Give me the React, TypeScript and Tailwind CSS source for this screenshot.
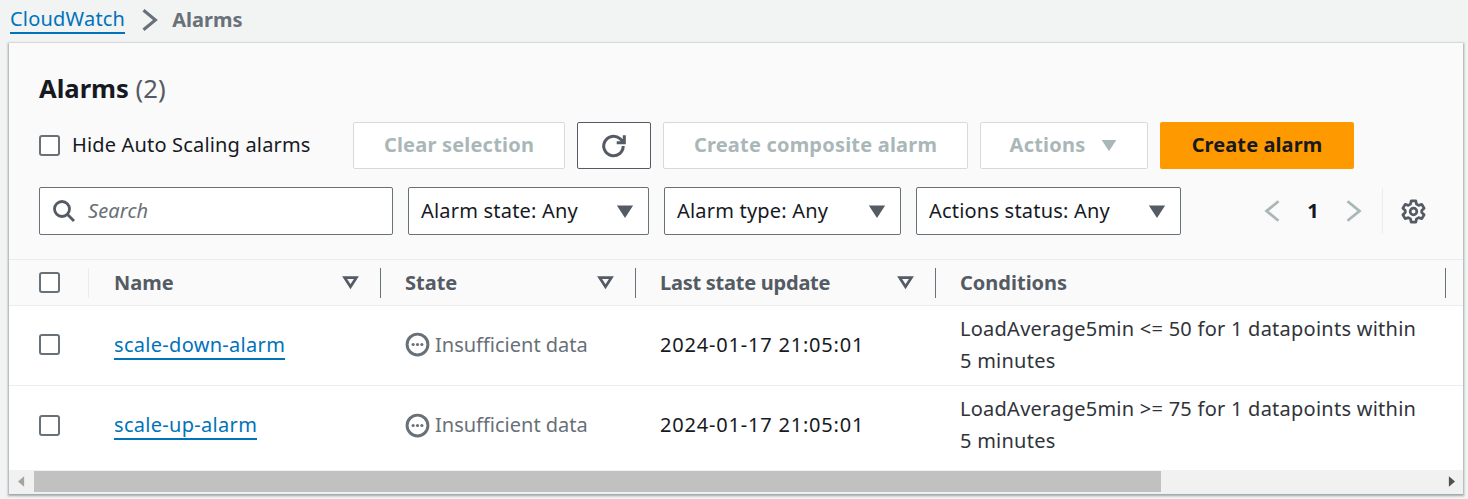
import React from 'react';

function Caret({ className }: { className: string }) {
  return (
    <svg viewBox="0 0 16 16" className={className} fill="currentColor">
      <path d="M1.5 3.5h13L8 13.5z" />
    </svg>
  );
}

function SortCaret() {
  return (
    <svg viewBox="0 0 16 16" className="w-[17px] h-[17px] text-[#545b64]" fill="none" stroke="currentColor" strokeWidth="2.6">
      <path d="M2.5 3.5h11L8 12z" strokeLinejoin="miter" />
    </svg>
  );
}

function Checkbox() {
  return <div className="w-[21px] h-[21px] shrink-0 rounded-[3px] border-2 border-[#687078] bg-white"></div>;
}

function DisabledButton({ label, width }: { label: string; width: string }) {
  return (
    <div className={`${width} h-[47px] pb-[2px] flex items-center justify-center bg-white border border-[#d5dbdb] rounded-[2px] text-[20px] font-bold tracking-[0.2px] text-[#aab7b8]`}>
      {label}
    </div>
  );
}

function FilterSelect({ label, width }: { label: string; width: string }) {
  return (
    <div className={`${width} h-[48px] flex items-center justify-between pl-[12px] pr-[13px] bg-white border border-[#687078] rounded-[2px] text-[20px] tracking-[0.2px] text-[#16191f]`}>
      <span>{label}</span>
      <Caret className="w-[20px] h-[20px] text-[#545b64]" />
    </div>
  );
}

function HeaderCell({ label, width, pad, sortable }: { label: string; width: string; pad: string; sortable?: boolean }) {
  return (
    <div className={`${width} ${pad} h-[30px] flex items-center justify-between pr-[21px] border-r border-[#687078] text-[20px] font-bold text-[#545b64]`}>
      <span>{label}</span>
      {sortable && <SortCaret />}
    </div>
  );
}

function StatusIcon() {
  return (
    <svg viewBox="0 0 24 24" className="w-[25px] h-[25px] text-[#687078]" fill="none" stroke="currentColor" strokeWidth="2.8">
      <circle cx="12" cy="12" r="10" />
      <circle cx="7.8" cy="12" r="1.5" fill="currentColor" stroke="none" />
      <circle cx="12" cy="12" r="1.5" fill="currentColor" stroke="none" />
      <circle cx="16.2" cy="12" r="1.5" fill="currentColor" stroke="none" />
    </svg>
  );
}

function AlarmRow({ name, condition, height }: { name: string; condition: string; height: string }) {
  return (
    <div className={`${height} flex items-center bg-white text-[20px] text-[#16191f]`}>
      <div className="w-[80px] pl-[30px]">
        <Checkbox />
      </div>
      <div className="w-[292px] pl-[25px]">
        <a className="text-[#0073bb] border-b-2 border-[#0073bb] tracking-[0.3px] leading-[26px] inline-block">{name}</a>
      </div>
      <div className="w-[254px] pl-[24px] flex items-center gap-[5px] text-[#687078]">
        <StatusIcon />
        <span>Insufficient data</span>
      </div>
      <div className="w-[300px] pl-[25px] tracking-[0.8px]">2024-01-17 21:05:01</div>
      <div className="flex-1 pl-[25px] pr-[40px] leading-[32px] tracking-[0.25px] text-[#30343a]">{condition}</div>
    </div>
  );
}

export default function App() {
  return (
    <div className="w-[1468px] h-[499px] overflow-hidden bg-[#f2f3f3] font-['Noto_Sans','Open_Sans',sans-serif]">
      {/* Breadcrumb */}
      <div className="h-[43px] flex items-center pl-[10px] pb-[3px] text-[20px]">
        <a className="text-[#0073bb] border-b-2 border-[#0073bb] tracking-[0.2px] leading-[26px]">CloudWatch</a>
        <svg viewBox="0 0 16 24" className="w-[18px] h-[26px] ml-[16px] mr-[13px] text-[#687078]" fill="none" stroke="currentColor" strokeWidth="2.8">
          <path d="M2 3l11 9-11 9" />
        </svg>
        <span className="font-bold text-[#687078]">Alarms</span>
      </div>

      {/* Card */}
      <div className="ml-[9px] w-[1454px] h-[451px] bg-white shadow-[0_1px_2px_1px_rgba(0,28,36,0.35)] flex flex-col">
        <div className="bg-[#fafafa]">
          <div className="h-[217px] pl-[30px] pr-[37px] pt-[27px] border-b border-[#eaeded]">
            <h1 className="text-[25.6px] leading-[37px] font-bold text-[#16191f]">
              Alarms <span className="font-normal text-[#545b64]">(2)</span>
            </h1>
            <div className="mt-[15px] flex items-center">
              <Checkbox />
              <span className="ml-[12px] w-[281px] pb-[2px] text-[20px] tracking-[0.17px] text-[#16191f]">Hide Auto Scaling alarms</span>
              <div className="flex gap-[12px]">
                <DisabledButton label="Clear selection" width="w-[212px]" />
                <div className="w-[74px] h-[47px] flex items-center justify-center bg-white border border-[#545b64] rounded-[2px]">
                  <svg viewBox="0 0 24 24" className="w-[26px] h-[26px] text-[#545b64]" fill="none" stroke="currentColor" strokeWidth="2.8">
                    <path d="M20.5 12a9 9 0 1 1-3-6.7L21 8.500" />
                    <path d="M21.500 2v7h-7" />
                  </svg>
                </div>
                <DisabledButton label="Create composite alarm" width="w-[305px]" />
                <div className="w-[168px] h-[47px] pb-[2px] flex items-center justify-center gap-[15px] bg-white border border-[#d5dbdb] rounded-[2px] text-[20px] font-bold tracking-[0.2px] text-[#aab7b8]">
                  <span>Actions</span>
                  <Caret className="w-[18px] h-[18px] text-[#aab7b8]" />
                </div>
                <div className="w-[194px] h-[47px] pb-[2px] flex items-center justify-center bg-[#ff9900] rounded-[2px] text-[20px] font-bold tracking-[0.1px] text-[#16191f]">
                  Create alarm
                </div>
              </div>
            </div>
            <div className="mt-[18px] flex items-center">
              <div className="w-[354px] h-[48px] flex items-center gap-[12px] pl-[12px] bg-white border border-[#687078] rounded-[2px]">
                <svg viewBox="0 0 24 24" className="w-[24px] h-[24px] text-[#545b64]" fill="none" stroke="currentColor" strokeWidth="2.8">
                  <circle cx="10" cy="10" r="7.5" />
                  <path d="M15.5 15.5L22 22" />
                </svg>
                <span className="text-[20px] italic tracking-[0.1px] text-[#687078]">Search</span>
              </div>
              <div className="ml-[15px] flex gap-[15px]">
                <FilterSelect label="Alarm state: Any" width="w-[241px]" />
                <FilterSelect label="Alarm type: Any" width="w-[237px]" />
                <FilterSelect label="Actions status: Any" width="w-[265px]" />
              </div>
              <div className="ml-auto flex items-center">
                <svg viewBox="0 0 16 24" className="w-[18px] h-[26px] text-[#aab7b8]" fill="none" stroke="currentColor" strokeWidth="2.6">
                  <path d="M14 3L3 12l11 9" />
                </svg>
                <span className="w-[64px] text-center text-[20px] font-bold text-[#16191f]">1</span>
                <svg viewBox="0 0 16 24" className="w-[18px] h-[26px] text-[#aab7b8]" fill="none" stroke="currentColor" strokeWidth="2.6">
                  <path d="M2 3l11 9-11 9" />
                </svg>
                <div className="ml-[19px] h-[46px] border-l border-[#eaeded] pl-[18px] flex items-center">
                  <svg viewBox="0 0 24 24" className="w-[25px] h-[25px] text-[#545b64]" fill="none" stroke="currentColor" strokeWidth="2.6" strokeLinejoin="round">
                    <path d="M9.8 1.8h4.4l.7 3.1 2.1 1.2 3-1 2.2 3.8-2.3 2.1v2l2.3 2.1-2.2 3.8-3-1-2.1 1.2-.7 3.1H9.8l-.7-3.1L7 17.9l-3 1-2.2-3.8L4.1 13v-2L1.8 8.9 4 5.100l3 1 2.100-1.200z" />
                    <circle cx="12" cy="12" r="3.200" />
                  </svg>
                </div>
              </div>
            </div>
          </div>

          {/* Table header */}
          <div className="h-[46px] flex items-center border-b border-[#eaeded]">
            <div className="w-[80px] h-[30px] pl-[30px] flex items-center border-r border-[#eaeded]">
              <Checkbox />
            </div>
            <HeaderCell label="Name" width="w-[292px]" pad="pl-[25px]" sortable />
            <HeaderCell label="State" width="w-[255px]" pad="pl-[24px]" sortable />
            <HeaderCell label="Last state update" width="w-[300px]" pad="pl-[24px] tracking-[-0.25px]" sortable />
            <HeaderCell label="Conditions" width="w-[510px]" pad="pl-[24px]" />
          </div>
        </div>

        <AlarmRow
          name="scale-down-alarm"
          condition="LoadAverage5min <= 50 for 1 datapoints within 5 minutes"
          height="h-[80px] pb-[2px] border-b border-[#eaeded]"
        />
        <AlarmRow
          name="scale-up-alarm"
          condition="LoadAverage5min >= 75 for 1 datapoints within 5 minutes"
          height="h-[78px] mb-[6px]"
        />

        {/* Horizontal scrollbar */}
        <div className="flex-1 bg-[#f1f1f1] flex items-start pt-[1px]">
          <div className="w-[25px] h-[21px] flex items-center justify-center">
            <svg viewBox="0 0 8 12" className="w-[7px] h-[11px] text-[#a3a3a3]" fill="currentColor">
              <path d="M7 0v12L0 6z" />
            </svg>
          </div>
          <div className="w-[1127px] h-[21px] bg-[#c1c1c1]"></div>
          <div className="flex-1 h-[21px] flex items-center justify-end pr-[8px]">
            <svg viewBox="0 0 8 12" className="w-[7px] h-[11px] text-[#505050]" fill="currentColor">
              <path d="M1 0v12l7-6z" />
            </svg>
          </div>
        </div>
      </div>
    </div>
  );
}
